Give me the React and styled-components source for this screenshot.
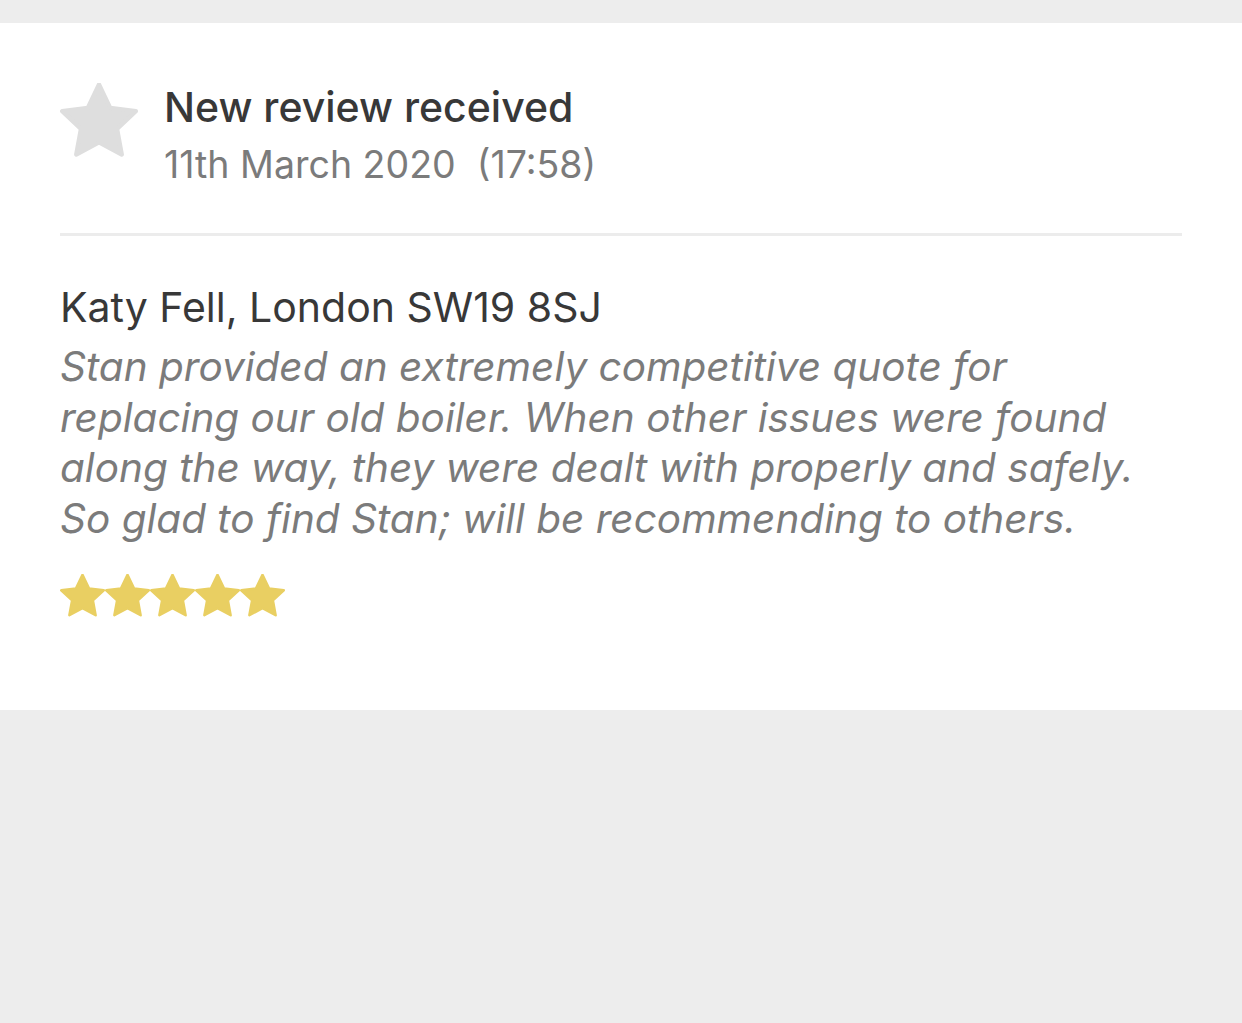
import React from "react";
import styled, { createGlobalStyle } from "styled-components";

const Global = createGlobalStyle`
  html, body { margin: 0; padding: 0; background: #ededed; }
  body { font-family: Inter, "Noto Sans", sans-serif; }
`;

const Page = styled.div`
  min-height: 1023px;
  background: #ededed;
  padding-top: 23px;
  box-sizing: border-box;
`;

const Card = styled.div`
  background: #ffffff;
  height: 687px;
  box-sizing: border-box;
  padding: 60px 60px 0 60px;
`;

const Header = styled.div`
  display: flex;
  align-items: flex-start;
  gap: 26px;
`;

const HeaderText = styled.div`
  display: flex;
  flex-direction: column;
  margin-top: -4px;
`;

const Title = styled.div`
  font-size: 41px;
  line-height: 56px;
  color: #383838;
  font-weight: 500;
`;

const DateLine = styled.div`
  font-size: 37.5px;
  line-height: 56px;
  margin-top: 2px;
  color: #7b7b7b;
  white-space: pre;
`;

const Divider = styled.div`
  height: 3px;
  background: #ececec;
  margin-top: 40px;
`;

const Name = styled.div`
  margin-top: 45px;
  font-size: 41px;
  line-height: 52px;
  color: #383838;
`;

const Review = styled.div`
  margin-top: 9px;
  font-size: 40.5px;
  line-height: 50.5px;
  color: #7b7b7b;
  font-style: italic;
`;

const ReviewLine = styled.span`
  display: block;
  white-space: nowrap;
`;

const Stars = styled.div`
  display: flex;
  margin-top: 30px;
`;

const StarSvg = styled.svg`
  display: block;
  flex: none;
`;

const StarIcon = ({ size, color }) => (
  <StarSvg width={size} height={size} viewBox="1.2 1.4 21.6 21.6">
    <path
      d="M12 1.8 L15.1 8.3 L22.2 9.2 L17 14.1 L18.3 21.2 L12 17.8 L5.7 21.2 L7 14.1 L1.8 9.2 L8.9 8.3 Z"
      fill={color}
      stroke={color}
      strokeWidth="1.2"
      strokeLinejoin="round"
    />
  </StarSvg>
);

const lines = [
  "Stan provided an extremely competitive quote for",
  "replacing our old boiler. When other issues were found",
  "along the way, they were dealt with properly and safely.",
  "So glad to find Stan; will be recommending to others.",
];

export default function App() {
  return (
    <>
      <Global />
      <Page>
        <Card>
          <Header>
            <StarIcon size={78} color="#dedede" />
            <HeaderText>
              <Title>New review received</Title>
              <DateLine>11th March 2020  (17:58)</DateLine>
            </HeaderText>
          </Header>
          <Divider />
          <Name>Katy Fell, London SW19 8SJ</Name>
          <Review>
            {lines.map((l) => (
              <ReviewLine key={l}>{l} </ReviewLine>
            ))}
          </Review>
          <Stars>
            {[0, 1, 2, 3, 4].map((i) => (
              <StarIcon key={i} size={45} color="#e9cf62" />
            ))}
          </Stars>
        </Card>
      </Page>
    </>
  );
}
